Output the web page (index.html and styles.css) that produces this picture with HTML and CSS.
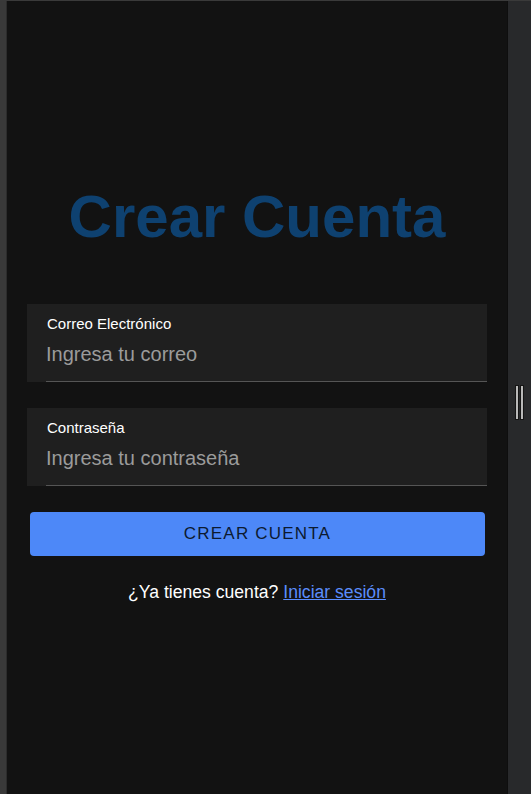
FILE: index.html
```html
<!DOCTYPE html>
<html lang="es">
<head>
<meta charset="utf-8">
<title>Crear Cuenta</title>
<link rel="stylesheet" href="styles.css">
</head>
<body>
<div class="frame">
  <div class="side-left"></div>
  <main class="panel">
    <h1 class="title">Crear Cuenta</h1>
    <form class="form">
      <div class="field">
        <label class="field-label" for="email">Correo Electrónico</label>
        <input class="field-input" id="email" type="email" placeholder="Ingresa tu correo">
      </div>
      <div class="field">
        <label class="field-label" for="pass">Contraseña</label>
        <input class="field-input" id="pass" type="password" placeholder="Ingresa tu contraseña">
      </div>
      <button class="submit" type="button">CREAR CUENTA</button>
    </form>
    <p class="footer-text">¿Ya tienes cuenta? <a class="link" href="#">Iniciar sesión</a></p>
  </main>
  <div class="side-right">
    <div class="grip"><span class="grip-bar"></span><span class="grip-bar"></span></div>
  </div>
</div>
</body>
</html>
```

FILE: styles.css
```css
* { box-sizing: border-box; }
html, body { margin: 0; padding: 0; height: 100%; }
body {
  background: #121212;
  font-family: "Liberation Sans", Arial, sans-serif;
  overflow: hidden;
}
.frame {
  display: flex;
  height: 794px;
  border-top: 1px solid #3a3a3a;
}
.side-left {
  width: 7px;
  flex: none;
  background: #393939;
  border-right: 1px solid #2c2c2c;
}
.panel {
  width: 500px;
  flex: none;
  background: #121212;
  padding: 186px 20px 0 20px;
  display: flex;
  flex-direction: column;
  align-items: stretch;
}
.side-right {
  flex: 1;
  background: #28292b;
  border-left: 1px solid #0e0e0e;
  display: flex;
  align-items: flex-start;
  justify-content: center;
  padding-top: 384px;
}
.grip {
  display: flex;
  gap: 1px;
}
.grip-bar {
  width: 4px;
  height: 35px;
  background: #b9b9b9;
  border: 1px solid #151515;
}
.title {
  margin: 0;
  font-size: 60px;
  line-height: 60px;
  font-weight: bold;
  color: #0e4170;
  text-align: center;
}
.form {
  margin-top: 57px;
  display: flex;
  flex-direction: column;
  gap: 26px;
}
.field {
  background: #1f1f1f;
  padding: 11px 0 0 20px;
  display: flex;
  flex-direction: column;
}
.field-label {
  font-size: 15px;
  line-height: 18px;
  color: #ffffff;
}
.field-input {
  font-family: "Liberation Sans", Arial, sans-serif;
  font-size: 20px;
  line-height: 23px;
  padding: 10px 0 15px 0;
  margin: 0 0 0 -1px;
  border: none;
  border-bottom: 1px solid #555555;
  background: transparent;
  color: #ffffff;
  outline: none;
  width: calc(100% + 1px);
}
.field-input::placeholder { color: #9b9b9b; }
.submit {
  margin: 0 2px 0 3px;
  height: 44px;
  background: #4d88f8;
  border: none;
  border-radius: 4px;
  color: #0c1a30;
  font-family: "Liberation Sans", Arial, sans-serif;
  font-size: 17px;
  letter-spacing: 1.2px;
}
.footer-text {
  margin: 26px 0 0 0;
  text-align: center;
  font-size: 17.6px;
  line-height: 20px;
  color: #ffffff;
}
.link {
  color: #5b8dfc;
  text-decoration: underline;
}
```
